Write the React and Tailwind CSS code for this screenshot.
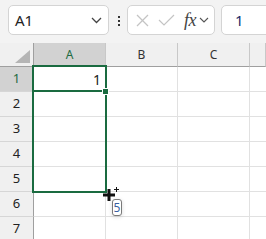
export default function App() {
  const rows = [1, 2, 3, 4, 5, 6, 7];
  const cols = ["A", "B", "C", ""];
  return (
    <div className="relative w-[266px] h-[239px] overflow-hidden bg-[#f3f3f3] font-['Noto_Sans','Open_Sans',sans-serif]">
      {/* top bar */}
      <div className="h-[43px] flex items-start pt-[5px] pl-[8px]">
        <div className="w-[101px] h-[30px] shrink-0 rounded-[5px] border border-[#d4d4d4] bg-white flex items-center justify-between pl-[6px] pr-[6px]">
          <span className="text-[15px] leading-none text-[#242424]">A1</span>
          <svg width="11" height="7" viewBox="0 0 11 7">
            <polyline points="1,1 5.5,5.5 10,1" fill="none" stroke="#444" strokeWidth="1.3" />
          </svg>
        </div>
        <div className="ml-[9px] mt-[11px] flex flex-col gap-[2px] shrink-0">
          <div className="w-[2px] h-[2px] bg-[#333]" />
          <div className="w-[2px] h-[2px] bg-[#333]" />
          <div className="w-[2px] h-[2px] bg-[#333]" />
        </div>
        <div className="ml-[7px] w-[88px] h-[30px] shrink-0 rounded-[5px] border border-[#d4d4d4] bg-white flex items-center pl-[8px]">
          <svg width="13" height="13" viewBox="0 0 13 13">
            <line x1="1" y1="1" x2="12" y2="12" stroke="#c4c4c4" strokeWidth="1.2" />
            <line x1="12" y1="1" x2="1" y2="12" stroke="#c4c4c4" strokeWidth="1.2" />
          </svg>
          <svg className="ml-[9px]" width="17" height="12" viewBox="0 0 17 12">
            <polyline points="1,6 6,11 16,1" fill="none" stroke="#c4c4c4" strokeWidth="1.2" />
          </svg>
          <span className="ml-[9px] text-[18px] leading-none italic text-[#444] font-['Liberation_Serif',serif] tracking-[-0.5px]">fx</span>
          <svg className="ml-[3px]" width="10" height="6" viewBox="0 0 10 6">
            <polyline points="1,1 5,5 9,1" fill="none" stroke="#555" strokeWidth="1.1" />
          </svg>
        </div>
        <div className="ml-[6px] w-[70px] h-[30px] shrink-0 rounded-[5px] border border-[#d4d4d4] bg-white flex items-center pl-[13px]">
          <span className="text-[15px] leading-none text-[#1a2f6b]">1</span>
        </div>
      </div>

      {/* grid */}
      <div className="grid grid-cols-[34px_72px_72px_72px_1fr] grid-rows-[24px_repeat(7,25px)]">
        <div className="relative bg-[#f0f0f0] border-r border-b border-[#9f9f9f]">
          <svg className="absolute right-[3px] bottom-[3px]" width="15" height="13" viewBox="0 0 15 13">
            <polygon points="15,0 15,13 0,13" fill="#b5b5b5" />
          </svg>
        </div>
        {cols.map((c, i) => (
          <div
            key={"h" + i}
            className={
              "flex items-center justify-center text-[12px] border-b border-[#9f9f9f] " +
              (i === 0
                ? "bg-[#d2d2d2] text-[#1d6b42] border-r border-r-[#c8c8c8]"
                : "bg-[#f0f0f0] text-[#333] border-r border-r-[#c8c8c8]")
            }
          >
            {c}
          </div>
        ))}
        {rows.map((r) => (
          <Row key={r} r={r} />
        ))}
      </div>

      {/* selection range */}
      <div className="absolute left-[32px] top-[65px] w-[75px] h-[128px] border-[2.5px] border-[#1a6b40]" />
      {/* active cell bottom */}
      <div className="absolute left-[32px] top-[90px] w-[70px] h-[2px] bg-[#1a6b40]" />
      {/* fill handle */}
      <div className="absolute left-[102px] top-[88px] w-[7px] h-[7px] bg-[#1a6b40] border border-white" />

      {/* cursor */}
      <svg className="absolute left-[103px] top-[187px]" width="20" height="16" viewBox="0 0 20 16">
        <rect x="0" y="6.5" width="12" height="3" fill="#111" />
        <rect x="4.5" y="2" width="3" height="12" fill="#111" />
        <rect x="11" y="2" width="5" height="1" fill="#111" />
        <rect x="13" y="0" width="1" height="5" fill="#111" />
      </svg>
      {/* tooltip */}
      <div className="absolute left-[112px] top-[199px] w-[10px] h-[17px] rounded-[3px] border border-[#7a7a7a] bg-white shadow-[0_1px_4px_rgba(0,0,0,0.15)] flex items-center justify-center">
        <span className="text-[12px] leading-none text-[#3a5fa0]">5</span>
      </div>
    </div>
  );
}

function Row({ r }) {
  const sel = r === 1;
  return (
    <>
      <div
        className={
          "flex items-center justify-center text-[13px] border-r border-[#9f9f9f] border-b border-b-[#d6d6d6] " +
          (sel ? "bg-[#d2d2d2] text-[#1d6b42]" : "bg-[#f0f0f0] text-[#222]")
        }
      >
        {r}
      </div>
      <div className="bg-white border-r border-b border-[#e1e1e1] flex items-center justify-end pr-[4px] text-[14px] text-[#222]">
        {r === 1 ? "1" : ""}
      </div>
      <div className="bg-white border-r border-b border-[#e1e1e1]" />
      <div className="bg-white border-r border-b border-[#e1e1e1]" />
      <div className="bg-white border-b border-[#e1e1e1]" />
    </>
  );
}
